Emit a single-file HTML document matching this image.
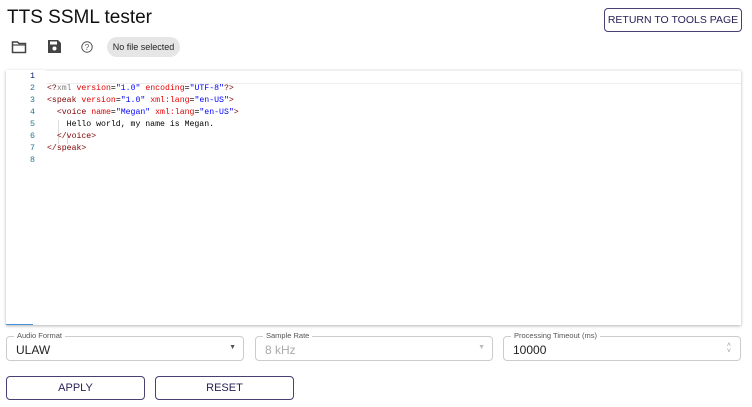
<!DOCTYPE html>
<html><head><style>
body{margin:0;width:752px;height:407px;background:#fff;font-family:"Liberation Sans",sans-serif;position:relative;overflow:hidden}
.abs{position:absolute}
h1{position:absolute;left:7px;top:7px;margin:0;font-size:19px;font-weight:normal;color:#111}
.btn{position:absolute;border:1px solid #4a3f73;border-radius:4px;color:#2a2255;font-size:11px;display:flex;align-items:center;justify-content:center;box-sizing:border-box;white-space:nowrap}
.chip{position:absolute;left:107px;top:37px;width:73px;height:20px;border-radius:10px;background:#e6e6e6;font-size:9px;color:#222;display:flex;align-items:center;justify-content:center}
.ed{position:absolute;left:6px;top:70px;width:735px;height:255px;box-shadow:0 1px 3px rgba(0,0,0,.3);background:#fff}
.ln{position:absolute;left:0;width:29px;text-align:right;font:8.3px "Liberation Mono",monospace;color:#237893}
.cd{position:absolute;left:41px;font:8.2px "Liberation Mono",monospace;color:#000;white-space:pre}
.t{color:#800000}.a{color:#e50000}.v{color:#0000ff}.g{color:#808080}
.fld{position:absolute;top:336px;height:25px;border:1px solid #ccc;border-radius:4px;box-sizing:border-box}
.lab{position:absolute;top:-6px;left:7px;background:#fff;padding:0 3px;font-size:7.5px;color:#555}
.val{position:absolute;left:9px;top:6px;font-size:12px;color:#222}
</style></head><body>
<h1>TTS SSML tester</h1>
<div class="btn" style="left:604px;top:8px;width:138px;height:24px;font-size:10.5px">RETURN TO TOOLS PAGE</div>
<svg class="abs" style="left:11px;top:40px" width="16" height="14" viewBox="0 0 16 14"><path d="M1.5 2h5l1.5 1.5h6.5v9h-13z" fill="none" stroke="#444" stroke-width="1.5"/><path d="M1.5 5h13" stroke="#444" stroke-width="1.2"/></svg>
<svg class="abs" style="left:48px;top:40px" width="13" height="13" viewBox="0 0 13 13"><path d="M0 0h10l3 3v10h-13z" fill="#444"/><rect x="2" y="1.5" width="7" height="3" fill="#fff"/><circle cx="6.5" cy="8.5" r="2" fill="#fff"/></svg>
<svg class="abs" style="left:81px;top:41px" width="12" height="12" viewBox="0 0 12 12"><circle cx="6" cy="6" r="5.2" fill="none" stroke="#555" stroke-width="1"/><text x="6" y="8.8" font-size="8" text-anchor="middle" fill="#555" font-family="Liberation Sans">?</text></svg>
<div class="chip">No file selected</div>
<div class="ed">
<div class="abs" style="left:40px;top:0;right:0;height:12px;border:1px solid #eee;border-left:none;border-right:none"></div>
<div class="abs" style="left:52px;top:50px;width:1px;height:24px;background:#ddd"></div>
<div class="abs" style="left:61px;top:62px;width:1px;height:12px;background:#ddd"></div>
<div class="ln" style="top:2px;color:#0b216f">1</div>
<div class="ln" style="top:14px">2</div>
<div class="ln" style="top:26px">3</div>
<div class="ln" style="top:38px">4</div>
<div class="ln" style="top:50px">5</div>
<div class="ln" style="top:62px">6</div>
<div class="ln" style="top:74px">7</div>
<div class="ln" style="top:86px">8</div>
<div class="cd" style="top:14px"><span class="t">&lt;?</span><span class="g">xml</span> <span class="a">version</span>=<span class="v">"1.0"</span> <span class="a">encoding</span>=<span class="v">"UTF-8"</span><span class="t">?&gt;</span></div>
<div class="cd" style="top:26px"><span class="t">&lt;speak</span> <span class="a">version</span>=<span class="v">"1.0"</span> <span class="a">xml:lang</span>=<span class="v">"en-US"</span><span class="t">&gt;</span></div>
<div class="cd" style="top:38px">  <span class="t">&lt;voice</span> <span class="a">name</span>=<span class="v">"Megan"</span> <span class="a">xml:lang</span>=<span class="v">"en-US"</span><span class="t">&gt;</span></div>
<div class="cd" style="top:50px">    Hello world, my name is Megan.</div>
<div class="cd" style="top:62px">  <span class="t">&lt;/voice&gt;</span></div>
<div class="cd" style="top:74px"><span class="t">&lt;/speak&gt;</span></div>
<div class="abs" style="left:0;bottom:0;width:27px;height:1px;background:#4a90d9"></div>
</div>
<div class="fld" style="left:6px;width:238px"><span class="lab">Audio Format</span><span class="val">ULAW</span><span class="abs" style="right:7px;top:7px;font-size:7px;color:#555">▼</span></div>
<div class="fld" style="left:255px;width:238px"><span class="lab">Sample Rate</span><span class="val" style="color:#aaa">8 kHz</span><span class="abs" style="right:7px;top:7px;font-size:7px;color:#bbb">▼</span></div>
<div class="fld" style="left:503px;width:238px"><span class="lab">Processing Timeout (ms)</span><span class="val">10000</span><span class="abs" style="right:9px;top:6px;font-size:7px;color:#999;line-height:6px">˄<br>˅</span></div>
<div class="btn" style="left:6px;top:376px;width:139px;height:24px">APPLY</div>
<div class="btn" style="left:155px;top:376px;width:139px;height:24px">RESET</div>
</body></html>
